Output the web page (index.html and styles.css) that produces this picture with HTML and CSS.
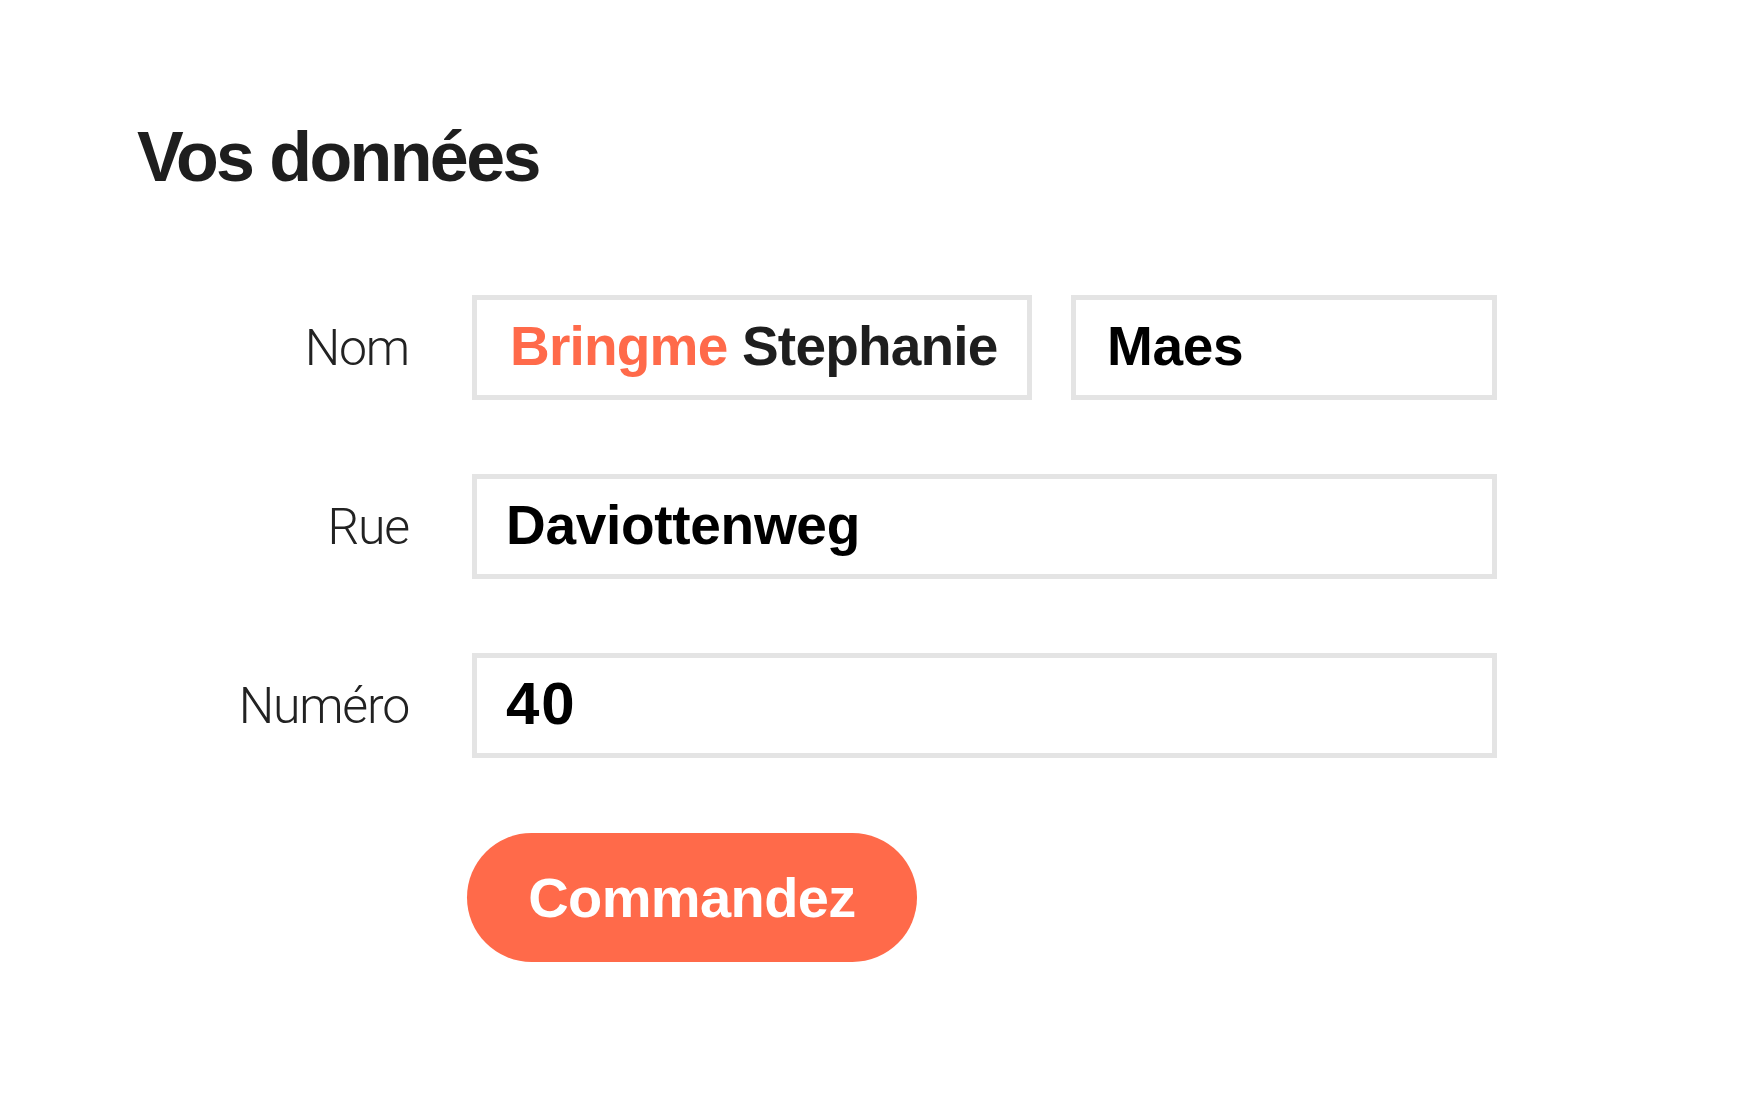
FILE: index.html
```html
<!DOCTYPE html>
<html lang="fr">
<head>
<meta charset="utf-8">
<title>Vos données</title>
<link rel="stylesheet" href="styles.css">
</head>
<body>
<main class="page">
  <h1 class="title">Vos données</h1>
  <form class="form">
    <div class="row">
      <label class="label">Nom</label>
      <div class="fields">
        <div class="field field-first"><span class="brand">Bringme</span> Stephanie</div>
        <div class="field field-last">Maes</div>
      </div>
    </div>
    <div class="row">
      <label class="label">Rue</label>
      <div class="fields">
        <div class="field field-full">Daviottenweg</div>
      </div>
    </div>
    <div class="row">
      <label class="label">Numéro</label>
      <div class="fields">
        <div class="field field-full field-num">40</div>
      </div>
    </div>
    <div class="row row-action">
      <span class="label"></span>
      <div class="fields">
        <button type="button" class="btn">Commandez</button>
      </div>
    </div>
  </form>
</main>
</body>
</html>
```

FILE: styles.css
```css
html, body {
  margin: 0;
  padding: 0;
  background: #ffffff;
}

.page {
  padding: 122px 0 0 137px;
  font-family: "Liberation Sans", Arial, sans-serif;
  color: #1e1e1e;
}

.title {
  margin: 0;
  font-size: 70px;
  line-height: 70px;
  font-weight: 700;
  letter-spacing: -2.6px;
  color: #1e1e1e;
}

.form {
  margin-top: 103px;
  display: flex;
  flex-direction: column;
  gap: 74px;
}

.row {
  display: flex;
  align-items: center;
  gap: 63px;
}

.label {
  width: 272px;
  flex: none;
  text-align: right;
  font-family: Roboto, "Liberation Sans", sans-serif;
  font-weight: 300;
  font-size: 50px;
  color: #222222;
  letter-spacing: -1.2px;
}

.fields {
  display: flex;
  gap: 39px;
  width: 1025px;
}

.field {
  box-sizing: border-box;
  height: 105px;
  border: 5px solid #e4e4e4;
  padding: 0 30px 4px 29px;
  display: flex;
  align-items: center;
  font-size: 55px;
  font-weight: 700;
  color: #111111;
  letter-spacing: -0.3px;
  white-space: pre;
}

.field-first {
  width: 560px;
  color: #1e1e1e;
  padding-left: 33px;
  letter-spacing: -0.8px;
}

.field-last {
  width: 426px;
  color: #000000;
  padding-left: 31px;
}

.field-full {
  width: 1025px;
  color: #000000;
}

.field-num {
  font-size: 60px;
  letter-spacing: 2px;
}

.brand {
  color: #ff6a4a;
}

.row-action {
  margin-top: 1px;
}

.btn {
  margin-left: -5px;
  width: 450px;
  height: 129px;
  border: none;
  border-radius: 65px;
  background: #ff6a4a;
  color: #ffffff;
  font-family: "Liberation Sans", Arial, sans-serif;
  font-size: 56px;
  font-weight: 700;
  letter-spacing: -0.6px;
  padding: 0;
  cursor: pointer;
}
```
